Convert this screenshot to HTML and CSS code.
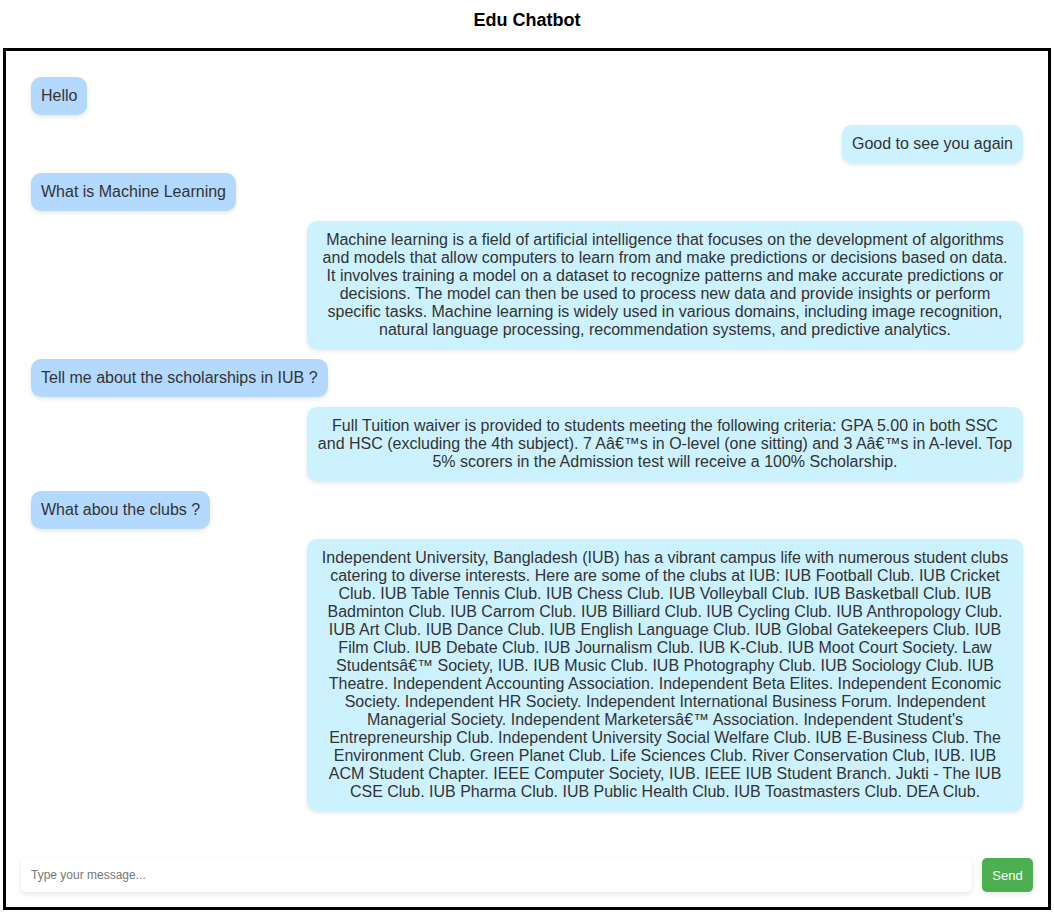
FILE: index.html
```html
<!DOCTYPE html>
<html>
<head>
<meta charset="utf-8">
<title>Edu Chatbot</title>
<link rel="stylesheet" href="styles.css">
</head>
<body>
<h1 class="title">Edu Chatbot</h1>
<div class="chat">
  <div class="messages">
    <div class="msg user">Hello</div>
    <div class="msg bot">Good to see you again</div>
    <div class="msg user">What is Machine Learning</div>
    <div class="msg bot">Machine learning is a field of artificial intelligence that focuses on the development of algorithms and models that allow computers to learn from and make predictions or decisions based on data. It involves training a model on a dataset to recognize patterns and make accurate predictions or decisions. The model can then be used to process new data and provide insights or perform specific tasks. Machine learning is widely used in various domains, including image recognition, natural language processing, recommendation systems, and predictive analytics.</div>
    <div class="msg user">Tell me about the scholarships in IUB ?</div>
    <div class="msg bot">Full Tuition waiver is provided to students meeting the following criteria: GPA 5.00 in both SSC and HSC (excluding the 4th subject). 7 Aâ€™s in O-level (one sitting) and 3 Aâ€™s in A-level. Top 5% scorers in the Admission test will receive a 100% Scholarship.</div>
    <div class="msg user">What abou the clubs ?</div>
    <div class="msg bot">Independent University, Bangladesh (IUB) has a vibrant campus life with numerous student clubs catering to diverse interests. Here are some of the clubs at IUB: IUB Football Club. IUB Cricket Club. IUB Table Tennis Club. IUB Chess Club. IUB Volleyball Club. IUB Basketball Club. IUB Badminton Club. IUB Carrom Club. IUB Billiard Club. IUB Cycling Club. IUB Anthropology Club. IUB Art Club. IUB Dance Club. IUB English Language Club. IUB Global Gatekeepers Club. IUB Film Club. IUB Debate Club. IUB Journalism Club. IUB K-Club. IUB Moot Court Society. Law Studentsâ€™ Society, IUB. IUB Music Club. IUB Photography Club. IUB Sociology Club. IUB Theatre. Independent Accounting Association. Independent Beta Elites. Independent Economic Society. Independent HR Society. Independent International Business Forum. Independent Managerial Society. Independent Marketersâ€™ Association. Independent Student's Entrepreneurship Club. Independent University Social Welfare Club. IUB E-Business Club. The Environment Club. Green Planet Club. Life Sciences Club. River Conservation Club, IUB. IUB ACM Student Chapter. IEEE Computer Society, IUB. IEEE IUB Student Branch. Jukti - The IUB CSE Club. IUB Pharma Club. IUB Public Health Club. IUB Toastmasters Club. DEA Club.</div>
  </div>
  <div class="input-row">
    <input class="input" type="text" placeholder="Type your message...">
    <button class="send">Send</button>
  </div>
</div>
</body>
</html>
```

FILE: styles.css
```css
* { box-sizing: border-box; }
html, body { height: 100%; }
body {
  margin: 0;
  padding: 0 3px 6px;
  font-family: "Liberation Sans", Arial, sans-serif;
  background: #fff;
  display: flex;
  flex-direction: column;
}
.title {
  margin: 0;
  padding: 10px 0 0;
  height: 48px;
  font-size: 18px;
  line-height: 20px;
  font-weight: bold;
  text-align: center;
  color: #000;
}
.chat {
  flex: 1;
  border: 3px solid #000;
  display: flex;
  flex-direction: column;
  min-height: 0;
}
.messages {
  flex: 1;
  padding: 26px 25px 0;
  display: flex;
  flex-direction: column;
  align-items: flex-start;
  overflow: hidden;
}
.msg {
  font-size: 16px;
  line-height: 18px;
  color: #333;
  padding: 10px;
  border-radius: 10px;
  margin-bottom: 10px;
  box-shadow: 0 2px 4px rgba(0, 0, 0, 0.1);
  max-width: 716px;
}
.user {
  background: #b3d9ff;
}
.bot {
  background: #ccf2ff;
  align-self: flex-end;
  text-align: center;
}
.input-row {
  display: flex;
  gap: 10px;
  padding: 14px 15px 15px;
}
.input {
  flex: 1;
  height: 34px;
  border: none;
  border-radius: 5px;
  padding: 0 10px;
  font-family: "Liberation Sans", Arial, sans-serif;
  font-size: 12px;
  box-shadow: 0 2px 5px rgba(0, 0, 0, 0.1);
  outline: none;
}
.input::placeholder { color: #777; }
.send {
  width: 51px;
  height: 34px;
  border: none;
  border-radius: 5px;
  background: #4caf50;
  color: #fff;
  font-family: "Liberation Sans", Arial, sans-serif;
  font-size: 13px;
  padding: 0;
  box-shadow: 0 2px 5px rgba(0, 0, 0, 0.1);
}
```
